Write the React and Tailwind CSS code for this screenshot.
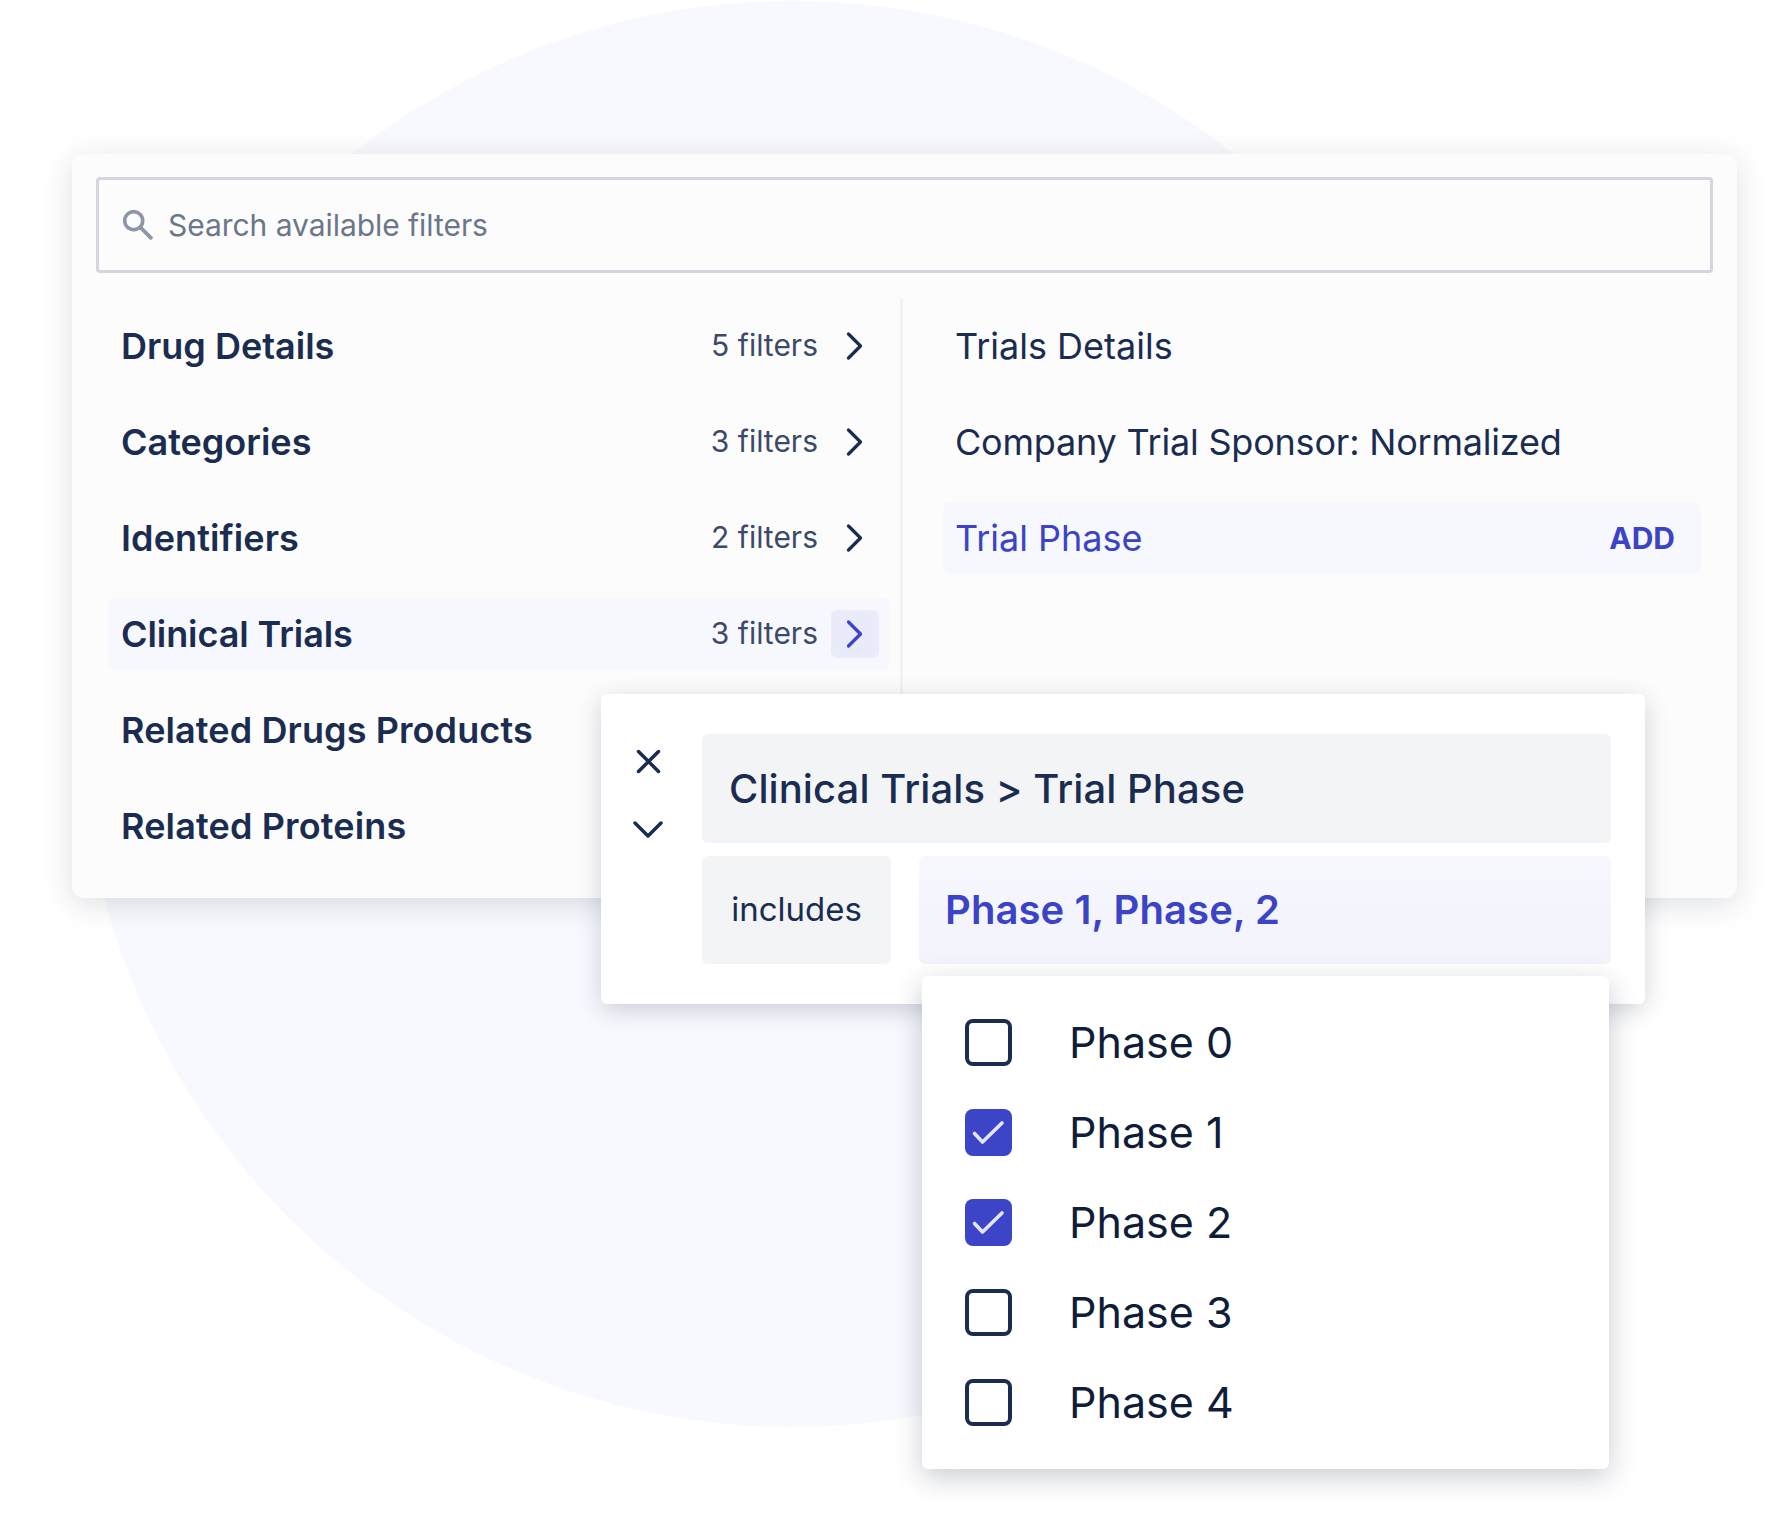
function Chevron({ className }) {
  return (
    <svg viewBox="0 0 18 30" fill="none" className={className}>
      <path d="M2.5 3L14.5 15L2.5 27" stroke="currentColor" strokeWidth="3.3" strokeLinecap="round" strokeLinejoin="round" />
    </svg>
  );
}

function Check() {
  return (
    <svg viewBox="0 0 47 47" fill="none" className="h-[47px] w-[47px]">
      <path d="M9.5 24.5L17.5 33L37 14" stroke="#e4e7fb" strokeWidth="3.6" strokeLinecap="round" strokeLinejoin="round" />
    </svg>
  );
}

function LeftRow({ label, count, active, tracking = "" }) {
  return (
    <div className={`flex h-[72px] items-center rounded-lg pl-[13px] pr-[11px] ${active ? "bg-[#f7f8fe]" : ""}`}>
      <span className={`flex-1 whitespace-nowrap text-[36px] font-semibold text-[#1a2c50] ${tracking}`}>{label}</span>
      {count && <span className="mb-[2px] whitespace-nowrap text-[30px] text-[#3c4a68]">{count}</span>}
      {count && (
        <span className={`ml-[13px] flex h-[48px] w-[48px] items-center justify-center rounded-md ${active ? "bg-[#e9ebfa] text-[#3b43c7]" : "text-[#1a2c50]"}`}>
          <Chevron className="h-[30px] w-[18px]" />
        </span>
      )}
    </div>
  );
}

function Phase({ label, checked }) {
  return (
    <div className="flex h-[47px] items-center">
      {checked ? (
        <span className="h-[47px] w-[47px] rounded-lg bg-[#3c44c8]"><Check /></span>
      ) : (
        <span className="h-[47px] w-[47px] rounded-lg border-4 border-[#1a2c50] bg-white" />
      )}
      <span className="ml-[57px] whitespace-nowrap text-[43px] text-[#0f1d38]">{label}</span>
    </div>
  );
}

export default function App() {
  return (
    <div className="relative h-[1539px] w-[1785px] overflow-hidden bg-white pl-[72px] pt-[154px] [font-family:Inter,sans-serif]">
      <div className="absolute left-[80px] top-[1px] h-[1426px] w-[1426px] rounded-full bg-[#f8f9fe]" />

      <div className="relative flex h-[744px] w-[1665px] flex-col rounded-xl bg-[#fcfcfc] px-[24px] pt-[23px] shadow-[0_6px_30px_rgba(30,40,70,0.15)]">
        <div className="flex h-[96px] items-center rounded-[4px] border-[3px] border-[#d3d6de] pl-[24px]">
          <svg viewBox="0 0 30 30" fill="none" className="h-[30px] w-[30px]">
            <circle cx="10.7" cy="10.7" r="9" stroke="#8c96a8" strokeWidth="3.6" />
            <path d="M16.5 16.5L29 29" stroke="#8c96a8" strokeWidth="3.8" />
          </svg>
          <span className="ml-[15px] whitespace-nowrap text-[30px] tracking-[-0.05px] text-[#6b7689]">Search available filters</span>
        </div>

        <div className="mt-[25px] flex flex-1">
          <div className="ml-[12px] mt-[12px] flex w-[782px] flex-col gap-[24px]">
            <LeftRow label="Drug Details" count="5 filters" />
            <LeftRow label="Categories" count="3 filters" />
            <LeftRow label="Identifiers" count="2 filters" tracking="tracking-[0.1px]" />
            <LeftRow label="Clinical Trials" count="3 filters" active tracking="tracking-[-0.08px]" />
            <LeftRow label="Related Drugs Products" tracking="tracking-[0.1px]" />
            <LeftRow label="Related Proteins" tracking="tracking-[0.14px]" />
          </div>
          <div className="ml-[10px] h-[440px] w-[3px] bg-[#f1f2f5]" />
          <div className="ml-[40px] mt-[12px] flex w-[758px] flex-col gap-[24px]">
            <div className="flex h-[72px] items-center pl-[12px] text-[36px] text-[#1a2c50]">Trials Details</div>
            <div className="flex h-[72px] items-center pl-[12px] text-[36px] tracking-[-0.2px] text-[#1a2c50]">Company Trial Sponsor: Normalized</div>
            <div className="flex h-[72px] items-center justify-between rounded-lg bg-[#f7f8fe] pl-[12px] pr-[26px]">
              <span className="text-[36px] text-[#3b43c7]">Trial Phase</span>
              <span className="text-[30px] font-bold text-[#3b43c7]">ADD</span>
            </div>
          </div>
        </div>
      </div>

      <div className="absolute left-[601px] top-[694px] flex h-[310px] w-[1044px] rounded-md bg-white shadow-[0_6px_24px_rgba(30,40,70,0.2)]">
        <div className="flex w-[94px] flex-col items-center pt-[55px] text-[#1a2c50]">
          <svg viewBox="0 0 25 25" fill="none" className="h-[25px] w-[25px]">
            <path d="M2.5 2.5L22.5 22.5M22.5 2.5L2.5 22.5" stroke="currentColor" strokeWidth="3.5" strokeLinecap="round" />
          </svg>
          <svg viewBox="0 0 32 18" fill="none" className="mt-[46px] h-[18px] w-[32px]">
            <path d="M3 3L16 16L29 3" stroke="currentColor" strokeWidth="3.5" strokeLinecap="round" strokeLinejoin="round" />
          </svg>
        </div>
        <div className="ml-[7px] flex w-[909px] flex-col gap-[13px] pt-[40px]">
          <div className="flex h-[109px] items-center rounded-md bg-[#f3f4f6] pl-[27px] text-[40px] font-medium tracking-[0.08px] text-[#1a2c50]">Clinical Trials &gt; Trial Phase</div>
          <div className="flex h-[108px] gap-[28px]">
            <div className="flex w-[189px] items-center justify-center rounded-md bg-[#f3f4f6] text-[33px] text-[#1a2c50]">includes</div>
            <div className="flex flex-1 items-center rounded-md bg-gradient-to-b from-[#f7f8fe] to-[#f2f3fb] pl-[26px] text-[40px] font-semibold tracking-[0.08px] text-[#3b43c7]">Phase 1, Phase, 2</div>
          </div>
        </div>
      </div>

      <div className="absolute left-[922px] top-[976px] flex h-[493px] w-[687px] flex-col gap-[43px] rounded-md bg-white pl-[43px] pt-[43px] shadow-[0_8px_28px_rgba(30,40,70,0.24)]">
        <Phase label="Phase 0" />
        <Phase label="Phase 1" checked />
        <Phase label="Phase 2" checked />
        <Phase label="Phase 3" />
        <Phase label="Phase 4" />
      </div>
    </div>
  );
}
